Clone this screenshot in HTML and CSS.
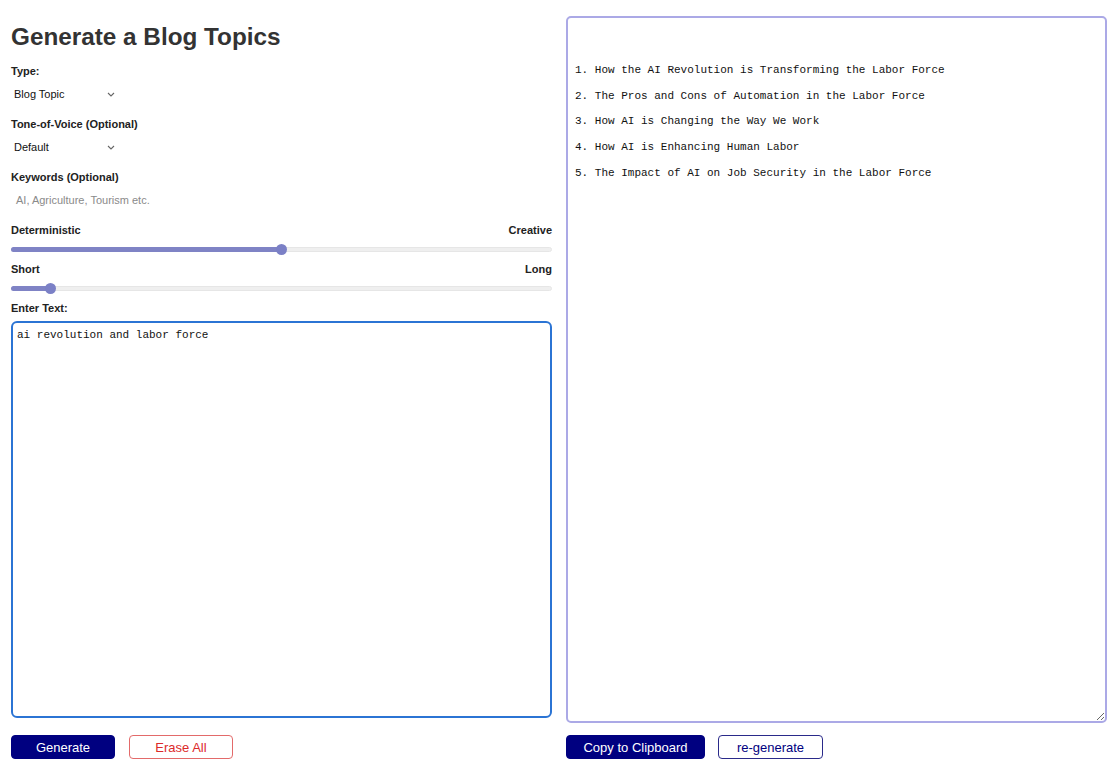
FILE: index.html
```html
<!DOCTYPE html>
<html lang="en">
<head>
<meta charset="utf-8">
<title>Generate a Blog Topics</title>
<link rel="stylesheet" href="styles.css">
</head>
<body>
<div class="page">
  <div class="col left">
    <h1 class="title">Generate a Blog Topics</h1>

    <div class="label">Type:</div>
    <div class="select">
      <span>Blog Topic</span>
      <svg class="chev" width="8" height="5" viewBox="0 0 8 5"><path d="M1 1 L4 4 L7 1" fill="none" stroke="#666" stroke-width="1.1"/></svg>
    </div>

    <div class="label gap">Tone-of-Voice (Optional)</div>
    <div class="select">
      <span>Default</span>
      <svg class="chev" width="8" height="5" viewBox="0 0 8 5"><path d="M1 1 L4 4 L7 1" fill="none" stroke="#666" stroke-width="1.1"/></svg>
    </div>

    <div class="label gap">Keywords (Optional)</div>
    <div class="input">AI, Agriculture, Tourism etc.</div>

    <div class="label ends gap2"><span>Deterministic</span><span>Creative</span></div>
    <div class="slider">
      <div class="track"><div class="fill" style="width:50%"></div><div class="thumb" style="left:50%"></div></div>
    </div>

    <div class="label ends gap3"><span>Short</span><span>Long</span></div>
    <div class="slider">
      <div class="track"><div class="fill" style="width:7.2%"></div><div class="thumb" style="left:7.2%"></div></div>
    </div>

    <div class="label gap3">Enter Text:</div>
    <div class="textarea">ai revolution and labor force</div>

    <div class="buttons">
      <button class="btn primary w104">Generate</button>
      <button class="btn danger w104">Erase All</button>
    </div>
  </div>

  <div class="col right">
    <div class="output">
      <div class="line">1. How the AI Revolution is Transforming the Labor Force</div>
      <div class="line">2. The Pros and Cons of Automation in the Labor Force</div>
      <div class="line">3. How AI is Changing the Way We Work</div>
      <div class="line">4. How AI is Enhancing Human Labor</div>
      <div class="line">5. The Impact of AI on Job Security in the Labor Force</div>
    </div>
    <div class="buttons rbtns">
      <button class="btn primary w139">Copy to Clipboard</button>
      <button class="btn outline w105">re-generate</button>
    </div>
  </div>
</div>
</body>
</html>
```

FILE: styles.css
```css
* { box-sizing: border-box; }
html, body { margin: 0; padding: 0; background: #fff; }
body {
  font-family: "Liberation Sans", Arial, sans-serif;
  color: #222;
  width: 1120px;
  height: 768px;
  overflow: hidden;
}
.page {
  display: grid;
  grid-template-columns: 541px 541px;
  column-gap: 14px;
  padding: 0 13px 0 11px;
}
.col { display: flex; flex-direction: column; }
.title {
  margin: 23px 0 0;
  font-size: 24.3px;
  line-height: 28px;
  font-weight: bold;
  color: #333;
}
.label {
  margin-top: 13px;
  font-size: 11px;
  line-height: 14px;
  font-weight: bold;
  color: #222;
}
.label.gap { margin-top: 13px; }
.label.gap2 { margin-top: 13px; }
.label.gap3 { margin-top: 7px; }
.ends { display: flex; justify-content: space-between; }
.select {
  margin-top: 6px;
  height: 20px;
  width: 104px;
  padding-left: 3px;
  display: flex;
  align-items: center;
  justify-content: space-between;
  font-size: 11px;
  color: #111;
}
.chev { margin-top: 1px; }
.input {
  margin-top: 6px;
  height: 20px;
  padding-left: 5px;
  display: flex;
  align-items: center;
  font-size: 11px;
  color: #8a8a8a;
}
.slider {
  margin-top: 6px;
  height: 12px;
  display: flex;
  align-items: center;
}
.track {
  position: relative;
  width: 100%;
  height: 5px;
  border-radius: 3px;
  background: #efefef;
  border: 1px solid #e6e6e6;
}
.fill {
  position: absolute;
  left: -1px;
  top: -1px;
  height: 5px;
  border-radius: 3px;
  background: #7f83c5;
}
.thumb {
  position: absolute;
  top: 50%;
  width: 11px;
  height: 11px;
  margin: -5.5px 0 0 -5.5px;
  border-radius: 50%;
  background: #7b80c6;
}
.textarea {
  margin-top: 6px;
  height: 397px;
  border: 2px solid #2b74d4;
  border-radius: 6px;
  padding: 6px 4px;
  font-family: "Liberation Mono", "Courier New", monospace;
  font-size: 11px;
  line-height: 13px;
  color: #111;
}
.buttons {
  margin-top: 17px;
  display: flex;
  gap: 14px;
}
.rbtns { margin-top: 12px; gap: 13px; }
.btn {
  height: 24px;
  padding: 0;
  border-radius: 4px;
  font-family: "Liberation Sans", Arial, sans-serif;
  font-size: 13px;
  cursor: pointer;
}
.w104 { width: 104px; }
.w139 { width: 139px; }
.w105 { width: 105px; }
.primary { background: #000080; color: #fff; border: 1px solid #000080; }
.danger { background: #fff; color: #dc2a2a; border: 1px solid #e36a6a; }
.outline { background: #fff; color: #000080; border: 1px solid #2a2a8a; }
.right { padding-top: 16px; }
.output {
  height: 707px;
  border: 2px solid #aba9e6;
  border-radius: 5px;
  padding: 40px 7px 0;
  font-family: "Liberation Mono", "Courier New", monospace;
  font-size: 11px;
  line-height: 25.7px;
  color: #111;
  resize: both;
  overflow: hidden;
}
```
